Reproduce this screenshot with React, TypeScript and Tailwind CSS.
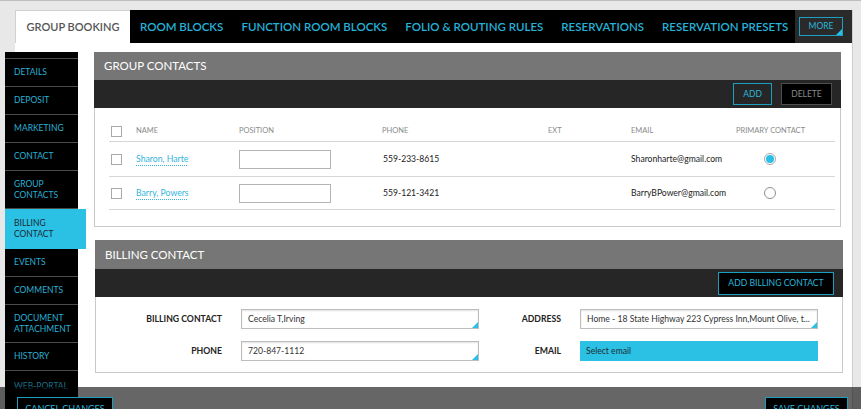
import React from 'react';

const tabs = ['ROOM BLOCKS', 'FUNCTION ROOM BLOCKS', 'FOLIO & ROUTING RULES', 'RESERVATIONS', 'RESERVATION PRESETS'];

const sideItems = [
  { label: 'DETAILS', h: 'h-[28px]' },
  { label: 'DEPOSIT', h: 'h-[28px]' },
  { label: 'MARKETING', h: 'h-[28px]' },
  { label: 'CONTACT', h: 'h-[28px]' },
  { label: 'GROUP CONTACTS', h: 'h-[38px]', two: true },
  { label: 'BILLING CONTACT', h: 'h-[40px]', two: true, active: true },
  { label: 'EVENTS', h: 'h-[28px]' },
  { label: 'COMMENTS', h: 'h-[28px]' },
  { label: 'DOCUMENT ATTACHMENT', h: 'h-[38px]', two: true },
  { label: 'HISTORY', h: 'h-[28px]' },
  { label: 'WEB-PORTAL', h: 'h-[40px]', dim: true },
];

const contacts = [
  { name: 'Sharon, Harte', phone: '559-233-8615', email: 'Sharonharte@gmail.com', primary: true },
  { name: 'Barry, Powers', phone: '559-121-3421', email: 'BarryBPower@gmail.com', primary: false },
];

function Corner() {
  return <span className="absolute right-0 bottom-0 w-[6px] h-[6px] bg-[#2bbfe3] [clip-path:polygon(100%_0,100%_100%,0_100%)]" />;
}

function Field({ value }: { value: string }) {
  return (
    <div className="relative w-[238px] h-[20px] border border-[#bdbdbd] bg-white shadow-[inset_0_1px_2px_rgba(0,0,0,0.12)] px-[6px] flex items-center text-[8.6px] text-[#333] whitespace-nowrap overflow-hidden">
      {value}
      <Corner />
    </div>
  );
}

export default function App() {
  return (
    <div className="relative w-[861px] h-[409px] overflow-hidden bg-[#e8e8e8] border-t border-[#bdbdbd] font-['Lato',sans-serif]">
      <div className="ml-[15px] mr-[8px] mt-[9px] h-[400px] bg-white border-r border-[#cdcdcd]">
        {/* tabs */}
        <div className="flex h-[33px]">
          <div className="w-[115px] shrink-0 flex items-center justify-center text-[11px] font-semibold text-[#555] whitespace-nowrap border-l border-t border-[#d0d0d0]">
            GROUP BOOKING
          </div>
          <div className="flex-1 min-w-0 overflow-hidden bg-black flex items-center pl-[1px]">
            {tabs.map((t) => (
              <span key={t} className="px-[9px] text-[11.5px] font-semibold text-[#25b2d8] whitespace-nowrap">
                {t}
              </span>
            ))}
          </div>
          <div className="w-[57px] shrink-0 bg-[#2a2a2a] flex items-center pl-[4px]">
            <div className="relative w-[44px] h-[19px] border border-[#1f9fc2] flex items-center justify-center text-[8.5px] text-[#2ab6dc]">
              MORE
              <Corner />
            </div>
          </div>
        </div>

        {/* body */}
        <div className="flex pt-[9px]">
          {/* sidebar */}
          <div className="-ml-[10px] w-[73px] flex flex-col shrink-0">
            <div className="h-[7px] bg-black border-b border-[#4a4a4a]" />
            {sideItems.map((s) => (
              <div
                key={s.label}
                className={
                  s.active
                    ? `${s.h} w-[81px] bg-[#2bc1e5] text-[#1c2a30] flex items-center pl-[9px] pr-[4px] text-[8.5px] leading-[11px]`
                    : `${s.h} bg-black border-b border-[#4a4a4a] flex pl-[9px] pr-[2px] text-[8.5px] leading-[11px] ${s.dim ? 'text-[#1b6f86] items-start pt-[10px] whitespace-nowrap' : 'text-[#2ab0d6] items-center'}`
                }
              >
                {s.label}
              </div>
            ))}
          </div>

          {/* main */}
          <div className="ml-[16px] flex-1 pr-[11px]">
            {/* group contacts */}
            <div className="w-[747px]">
              <div className="h-[28px] bg-[#767676] flex items-center pl-[10px] text-[11.5px] text-white">GROUP CONTACTS</div>
              <div className="h-[28px] bg-[#262626] flex items-center justify-end gap-[9px] pr-[9px]">
                <div className="h-[22px] w-[39px] border border-[#1a9fc2] flex items-center justify-center text-[8.5px] text-[#2ab6dc]">ADD</div>
                <div className="h-[22px] w-[51px] border border-[#4d4d4d] bg-black flex items-center justify-center text-[8.5px] text-[#8a8a8a]">DELETE</div>
              </div>
              <div className="border border-t-0 border-[#c9c9c9] pl-[14px] pr-[5px] pt-[13px] pb-[16px]">
                <div className="grid grid-cols-[27px_103px_143px_166px_83px_105px_1fr] items-center h-[21px] border-b border-[#d6d6d6] text-[7.5px] text-[#8a8a8a]">
                  <span className="pl-[2px]"><span className="block w-[11px] h-[11px] border border-[#a9a9a9]" /></span>
                  <span>NAME</span>
                  <span>POSITION</span>
                  <span>PHONE</span>
                  <span>EXT</span>
                  <span>EMAIL</span>
                  <span>PRIMARY CONTACT</span>
                </div>
                {contacts.map((c, i) => (
                  <div key={c.name} className={`grid grid-cols-[27px_103px_143px_166px_83px_105px_1fr] items-center ${i === 0 ? 'h-[35px]' : 'h-[33px]'} border-b border-[#d6d6d6]`}>
                    <span className="pl-[2px]"><span className="block w-[11px] h-[11px] border border-[#a9a9a9]" /></span>
                    <span className="text-[8.7px] text-[#33b5dd] underline decoration-dotted decoration-[#33b5dd] underline-offset-[3px] whitespace-nowrap">{c.name}</span>
                    <span><span className="block w-[92px] h-[19px] border border-[#b4b4b4] bg-white" /></span>
                    <span className="text-[8.6px] text-[#222] pl-[1px]">{c.phone}</span>
                    <span />
                    <span className="text-[8.6px] text-[#222] whitespace-nowrap">{c.email}</span>
                    <span className="pl-[28px]">
                      {c.primary ? (
                        <span className="flex items-center justify-center w-[12px] h-[12px] rounded-full border border-[#a9a9a9] bg-white">
                          <span className="w-[8px] h-[8px] rounded-full bg-[#2bbfe6]" />
                        </span>
                      ) : (
                        <span className="block w-[12px] h-[12px] rounded-full border border-[#8e8e8e] bg-white" />
                      )}
                    </span>
                  </div>
                ))}
              </div>
            </div>

            {/* billing contact */}
            <div className="mt-[13px] ml-[1px] w-[748px]">
              <div className="h-[29px] bg-[#767676] flex items-center pl-[10px] text-[11.5px] text-white">BILLING CONTACT</div>
              <div className="h-[28px] bg-[#262626] flex items-center justify-end pr-[9px]">
                <div className="h-[23px] w-[116px] border border-[#1a9fc2] bg-black flex items-center justify-center text-[8.6px] text-[#2ab6dc]">ADD BILLING CONTACT</div>
              </div>
              <div className="border border-t-0 border-[#c9c9c9] pt-[12px] pb-[11px] flex flex-col gap-[12px]">
                <div className="flex items-center">
                  <span className="w-[126px] text-right text-[8.7px] font-bold text-[#222]">BILLING CONTACT</span>
                  <span className="ml-[19px]"><Field value="Cecelia T,Irving" /></span>
                  <span className="w-[82px] text-right text-[8.7px] font-bold text-[#222]">ADDRESS</span>
                  <span className="ml-[19px]"><Field value="Home - 18 State Highway 223 Cypress Inn,Mount Olive, t..." /></span>
                </div>
                <div className="flex items-center">
                  <span className="w-[126px] text-right text-[8.7px] font-bold text-[#222]">PHONE</span>
                  <span className="ml-[19px]"><Field value="720-847-1112" /></span>
                  <span className="w-[82px] text-right text-[8.7px] font-bold text-[#222]">EMAIL</span>
                  <span className="ml-[19px]">
                    <div className="w-[238px] h-[20px] bg-[#2bc1e5] px-[6px] flex items-center text-[8.6px] text-[#1b2c33]">Select email</div>
                  </span>
                </div>
              </div>
            </div>
          </div>
        </div>
      </div>

      {/* footer overlay */}
      <div className="absolute left-0 right-0 top-[386px] bottom-0 bg-black/60 flex justify-between pl-[17px] pr-[13px] pt-[10px]">
        <div className="h-[24px] w-[96px] bg-black border border-[#1a9fc2] flex items-center justify-center text-[9px] text-[#2ab6dc]">CANCEL CHANGES</div>
        <div className="h-[24px] w-[83px] bg-black border border-[#1a9fc2] flex items-center justify-center text-[9px] text-[#2ab6dc]">SAVE CHANGES</div>
      </div>
    </div>
  );
}
